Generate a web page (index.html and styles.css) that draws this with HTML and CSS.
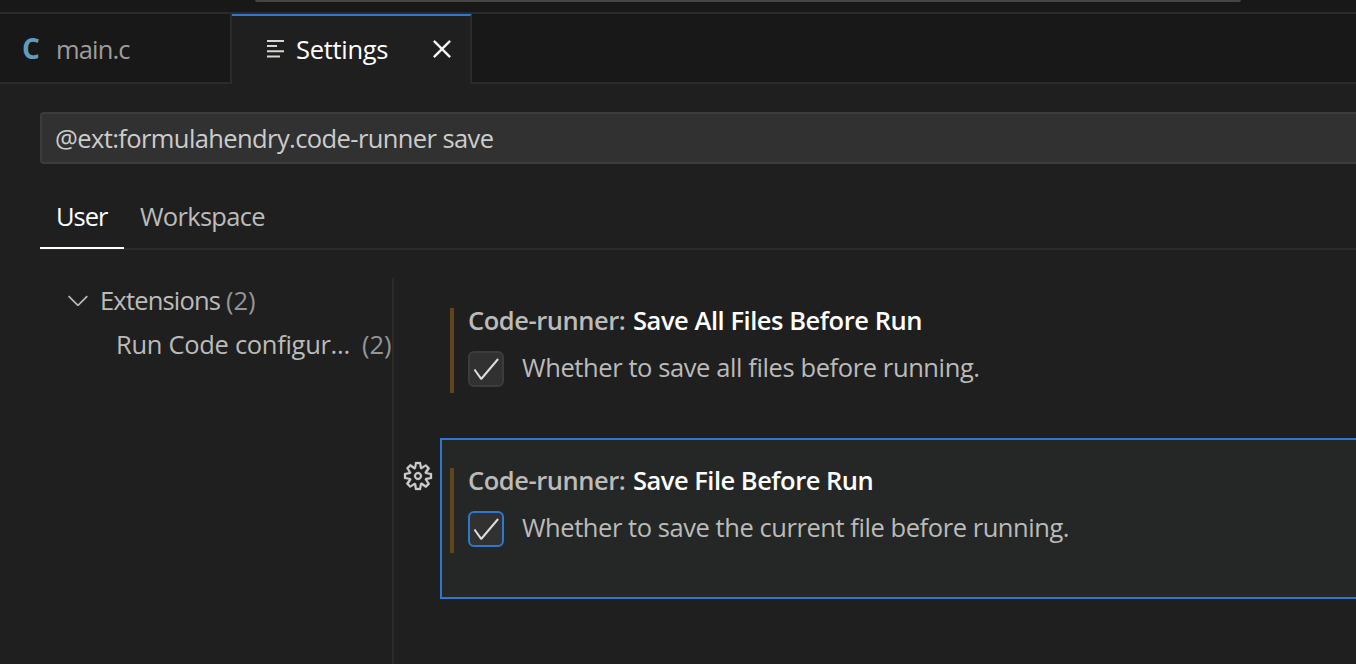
FILE: index.html
```html
<!DOCTYPE html>
<html lang="en">
<head>
<meta charset="utf-8">
<title>Settings</title>
<link rel="stylesheet" href="styles.css">
</head>
<body>
<header class="titlebar"><div class="command-center"></div></header>
<nav class="tabs">
  <div class="tab tab-file"><span class="c-icon">C</span><span class="label label-file">main.c</span></div>
  <div class="tab tab-active">
    <svg class="list-icon" viewBox="0 0 18 18"><path d="M0 0h17v2H0zM0 5h10v2H0zM0 10.3h17v2H0zM0 15.4h13v2H0z"/></svg>
    <span class="label label-settings">Settings</span>
    <svg class="icon close" viewBox="0 0 16 16"><path d="M8 8.707l3.646 3.647.708-.707L8.707 8l3.647-3.646-.707-.708L8 7.293 4.354 3.646l-.707.708L7.293 8l-3.646 3.646.707.708L8 8.707z"/></svg>
  </div>
  <div class="tab-rest"></div>
</nav>
<main class="editor">
  <div class="search"><span class="query">@ext:formulahendry.code-runner save</span></div>
  <div class="scopes">
    <div class="scope scope-active"><span class="t-user">User</span></div>
    <div class="scope"><span class="t-workspace">Workspace</span></div>
  </div>
  <div class="body">
    <aside class="toc">
      <div class="toc-row">
        <svg class="icon chevron" viewBox="0 0 16 16"><path d="M7.976 10.072l4.357-4.357.62.618L8.284 11h-.618L3 6.333l.619-.618 4.357 4.357z"/></svg>
        <span class="t-ext">Extensions</span><span class="count">(2)</span>
      </div>
      <div class="toc-row toc-child"><span class="t-run">Run Code configur...</span><span class="count">(2)</span></div>
    </aside>
    <section class="list">
      <article class="setting">
        <div class="content">
          <h3><span class="category">Code-runner:</span><span class="name name-all">Save All Files Before Run</span></h3>
          <div class="option">
            <span class="checkbox"><svg class="icon" viewBox="0 0 16 16"><path d="M14.431 3.323l-8.47 10-.79-.036-3.35-4.77.818-.574 2.978 4.24 8.051-9.506.764.646z"/></svg></span>
            <span class="desc desc-all">Whether to save all files before running.</span>
          </div>
        </div>
      </article>
      <article class="setting selected">
        <svg class="icon gear" viewBox="0 0 16 16"><path fill-rule="evenodd" d="M9.1 4.4L8.6 2H7.4l-.5 2.4-.7.3-2-1.3-.9.8 1.3 2-.2.7-2.4.5v1.2l2.4.5.3.8-1.3 2 .8.8 2-1.3.8.3.4 2.3h1.2l.5-2.4.8-.3 2 1.3.8-.8-1.3-2 .3-.8 2.3-.4V7.4l-2.4-.5-.3-.8 1.3-2-.8-.8-2 1.3-.7-.2zM9.4 1l.5 2.4L12 2.1l2 2-1.4 2.1 2.4.4v2.8l-2.4.5L14 12l-2 2-2.1-1.4-.5 2.4H6.6l-.5-2.4L4 13.9l-2-2 1.4-2.1L1 9.4V6.6l2.4-.5L2.1 4l2-2 2.1 1.4.4-2.4h2.8zm.6 7c0 1.1-.9 2-2 2s-2-.9-2-2 .9-2 2-2 2 .9 2 2zM8 9c.6 0 1-.4 1-1s-.4-1-1-1-1 .4-1 1 .4 1 1 1z"/></svg>
        <div class="content">
          <h3><span class="category">Code-runner:</span><span class="name name-file">Save File Before Run</span></h3>
          <div class="option">
            <span class="checkbox"><svg class="icon" viewBox="0 0 16 16"><path d="M14.431 3.323l-8.47 10-.79-.036-3.35-4.77.818-.574 2.978 4.24 8.051-9.506.764.646z"/></svg></span>
            <span class="desc desc-file">Whether to save the current file before running.</span>
          </div>
        </div>
      </article>
    </section>
  </div>
</main>
</body>
</html>
```
FILE: styles.css
```css
* { box-sizing: border-box; }
body {
  margin: 0;
  width: 1356px;
  height: 664px;
  overflow: hidden;
  background: #1f1f1f;
  color: #bbb;
  font: 25.5px/36px "Open Sans", "Noto Sans", sans-serif;
  white-space: nowrap;
}
.icon { width: 32px; height: 32px; flex: none; fill: currentColor; }

.titlebar { height: 14px; background: #181818; border-bottom: 2px solid #2b2b2b; }
.command-center { width: 986px; height: 2px; margin-left: 255px; background: #454545; border-radius: 0 0 6px 6px; }

.tabs { display: flex; height: 70px; }
.tab { display: flex; align-items: center; border-right: 2px solid #2b2b2b; }
.tab-file { width: 232px; padding-left: 22px; background: #181818; border-bottom: 2px solid #2b2b2b; color: #9d9d9d; }
.tab-active { width: 240px; padding: 0 0 2px 35px; border-top: 2px solid #2f78ce; color: #fff; }
.tab-rest { flex: 1; background: #181818; border-bottom: 2px solid #2b2b2b; }
.c-icon { width: 34px; color: #5f9dbd; font-weight: 700; font-size: 28px; }
.label-file { padding-top: 2px; letter-spacing: -0.85px; }
.list-icon { width: 18px; height: 18px; margin: -1px 11px 0 0; fill: #d5d8d0; }
.label-settings { width: 130px; letter-spacing: -0.3px; }
.close { margin-top: -1px; stroke: currentColor; stroke-width: .2; }

.editor { padding: 28px 0 0 40px; }
.search { display: flex; align-items: center; height: 52px; padding-left: 13px; background: #313131; border: 2px solid #3c3c3c; border-right: 0; border-radius: 4px 0 0 4px; color: #ccc; letter-spacing: -0.6px; }
.scopes { display: flex; height: 86px; padding-top: 35px; border-bottom: 2px solid #2b2b2b; line-height: 34px; }
.scope { height: 50px; padding: 0 16px; }
.scope-active { width: 84px; color: #fff; border-bottom: 2px solid #fff; }
.t-user { letter-spacing: -1px; }
.t-workspace { letter-spacing: -0.7px; }

.body { display: flex; height: 414px; padding-top: 28px; }
.toc { width: 354px; border-right: 2px solid #2b2b2b; }
.toc-row { display: flex; align-items: center; height: 44px; padding-left: 22px; }
.chevron { margin-right: 6px; }
.toc-child { padding-left: 76px; }
.t-ext { width: 126px; letter-spacing: -0.82px; }
.t-run { width: 246px; letter-spacing: -0.3px; }
.count { color: #959595; }

.list { flex: 1; padding-left: 46px; }
.setting { position: relative; height: 160px; padding: 30px 0 0 10px; }
.selected { height: 161px; padding: 28px 0 0 8px; background: #252726; border: 2px solid #2f78ce; border-right: 0; }
.content { height: 85px; padding-left: 14px; border-left: 4px solid #5e461c; }
.gear { position: absolute; left: -40px; top: 20px; color: #ccc; stroke: currentColor; stroke-width: .15; }
h3 { display: flex; margin: 0; height: 43px; font-size: inherit; font-weight: 600; line-height: 25px; }
.category { width: 165px; letter-spacing: -0.45px; }
.name { color: #fff; }
.name-all { letter-spacing: -0.45px; }
.name-file { letter-spacing: -0.5px; }
.option { display: flex; align-items: center; height: 36px; }
.checkbox { display: grid; place-items: center; width: 36px; height: 36px; margin-right: 18px; background: #313131; border: 2px solid #3c3c3c; border-radius: 6px; color: #ddd; }
.selected .checkbox { border-color: #2f78ce; }
.desc { padding-bottom: 4px; }
.desc-all { letter-spacing: -0.4px; }
.desc-file { letter-spacing: -0.44px; }
```
